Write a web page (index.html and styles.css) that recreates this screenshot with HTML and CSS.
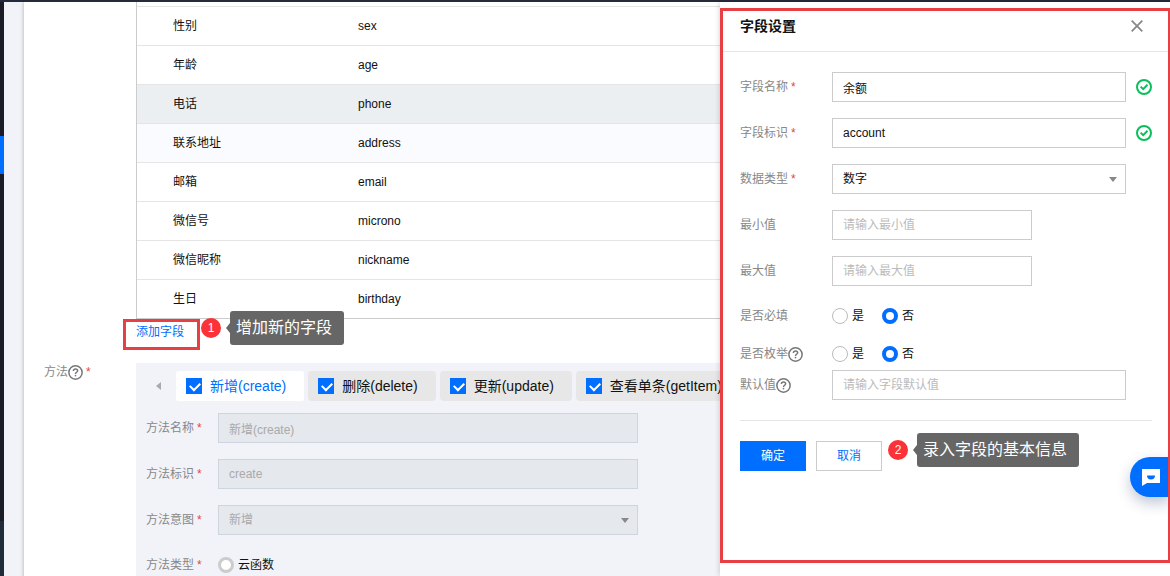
FILE: index.html
```html
<!DOCTYPE html>
<html lang="zh-CN">
<head>
<meta charset="utf-8">
<meta name="viewport" content="width=device-width, initial-scale=1">
<title>字段设置</title>
<link rel="stylesheet" href="styles.css">
</head>
<body>
<svg class="sprite" aria-hidden="true">
  <symbol id="help" viewBox="0 0 14 14">
    <circle cx="7" cy="7" r="6.2" fill="none" stroke="currentColor" stroke-width="1.4"/>
    <path d="M5 5.7C5 4.4 5.9 3.700 7 3.700s2 .7 2 1.700c0 1.300-2 1.500-2 2.900" fill="none" stroke="currentColor" stroke-width="1.400"/>
    <rect x="6.300" y="9.200" width="1.400" height="1.400" fill="currentColor"/>
  </symbol>
  <symbol id="passed" viewBox="0 0 16 16">
    <circle cx="8" cy="8" r="7" fill="none" stroke="currentColor" stroke-width="2"/>
    <path d="M4.600 7.600l2.600 2.500 4.300-4.300" fill="none" stroke="currentColor" stroke-width="2"/>
  </symbol>
  <symbol id="caret" viewBox="0 0 8 5">
    <path d="M0 0h8L4 5z" fill="currentColor"/>
  </symbol>
</svg>

<div class="topbar"></div>
<div class="shell">
  <nav class="sidebar"><span class="sidebar-active"></span><span class="sidebar-foot"></span></nav>
  <main class="page">
    <section class="panel">
      <div class="section">
        <div class="section-label"></div>
        <div class="section-body">
          <div class="table-wrap">
            <table class="fields">
              <tbody>
                <tr><td>性别</td><td>sex</td></tr>
                <tr><td>年龄</td><td>age</td></tr>
                <tr class="hovered"><td>电话</td><td>phone</td></tr>
                <tr class="tinted"><td>联系地址</td><td>address</td></tr>
                <tr><td>邮箱</td><td>email</td></tr>
                <tr><td>微信号</td><td>microno</td></tr>
                <tr><td>微信昵称</td><td>nickname</td></tr>
                <tr><td>生日</td><td>birthday</td></tr>
              </tbody>
            </table>
          </div>
          <div class="add-row">
            <a class="add-link" href="#">添加字段</a>
            <div class="callout callout-add">
              <span class="frame"></span>
              <span class="badge">1</span>
              <span class="tip">增加新的字段</span>
            </div>
          </div>
        </div>
      </div>

      <div class="section">
        <div class="section-label">方法<svg class="help"><use href="#help"/></svg><span class="required">*</span></div>
        <div class="section-body methods">
          <div class="tabs">
            <button class="tabs-prev" type="button" aria-label="上一个"><svg viewBox="0 0 5 8"><path d="M5 0v8L0 4z" fill="currentColor"/></svg></button>
            <label class="tab tab-active"><input class="check" type="checkbox" checked>新增(create)</label>
            <label class="tab"><input class="check" type="checkbox" checked>删除(delete)</label>
            <label class="tab"><input class="check" type="checkbox" checked>更新(update)</label>
            <label class="tab"><input class="check" type="checkbox" checked>查看单条(getItem)</label>
          </div>
          <form class="method-form">
            <div class="row">
              <label class="label" for="m-name">方法名称<span class="required">*</span></label>
              <input class="input" id="m-name" type="text" value="新增(create)" disabled>
            </div>
            <div class="row">
              <label class="label" for="m-id">方法标识<span class="required">*</span></label>
              <input class="input" id="m-id" type="text" value="create" disabled>
            </div>
            <div class="row">
              <label class="label" for="m-intent">方法意图<span class="required">*</span></label>
              <div class="select">
                <select class="input" id="m-intent" disabled><option>新增</option></select>
                <svg class="caret"><use href="#caret"/></svg>
              </div>
            </div>
            <div class="row row-choice">
              <span class="label">方法类型<span class="required">*</span></span>
              <label class="choice"><input class="radio" type="radio" name="m-type" disabled>云函数</label>
            </div>
          </form>
        </div>
      </div>
    </section>
  </main>
</div>

<aside class="drawer">
  <header class="drawer-head">
    <h2 class="drawer-title">字段设置</h2>
    <button class="close" type="button" aria-label="关闭"><svg viewBox="0 0 12 12"><path d="M.7.7l10.600 10.600M11.300.7L.7 11.300" stroke="currentColor" stroke-width="1.800"/></svg></button>
  </header>
  <form class="drawer-form">
    <div class="row">
      <label class="label" for="f-name">字段名称<span class="required">*</span></label>
      <input class="input" id="f-name" type="text" value="余额">
      <span class="status"><svg><use href="#passed"/></svg></span>
    </div>
    <div class="row">
      <label class="label" for="f-id">字段标识<span class="required">*</span></label>
      <input class="input" id="f-id" type="text" value="account">
      <span class="status"><svg><use href="#passed"/></svg></span>
    </div>
    <div class="row">
      <label class="label" for="f-type">数据类型<span class="required">*</span></label>
      <div class="select">
        <select class="input" id="f-type"><option>数字</option></select>
        <svg class="caret"><use href="#caret"/></svg>
      </div>
      <span class="status"></span>
    </div>
    <div class="row">
      <label class="label" for="f-min">最小值</label>
      <input class="input input-short" id="f-min" type="text" placeholder="请输入最小值">
    </div>
    <div class="row">
      <label class="label" for="f-max">最大值</label>
      <input class="input input-short" id="f-max" type="text" placeholder="请输入最大值">
    </div>
    <div class="row row-choice">
      <span class="label">是否必填</span>
      <label class="choice"><input class="radio" type="radio" name="req">是</label>
      <label class="choice"><input class="radio" type="radio" name="req" checked>否</label>
    </div>
    <div class="row row-choice row-enum">
      <span class="label">是否枚举<svg class="help"><use href="#help"/></svg></span>
      <label class="choice"><input class="radio" type="radio" name="enum">是</label>
      <label class="choice"><input class="radio" type="radio" name="enum" checked>否</label>
    </div>
    <div class="row row-default">
      <label class="label" for="f-default">默认值<svg class="help"><use href="#help"/></svg></label>
      <input class="input" id="f-default" type="text" placeholder="请输入字段默认值">
      <span class="status"></span>
    </div>
    <footer class="actions">
      <button class="btn btn-primary" type="button">确定</button>
      <button class="btn" type="button">取消</button>
      <div class="callout callout-form">
        <span class="badge">2</span>
        <span class="tip">录入字段的基本信息</span>
      </div>
    </footer>
  </form>
  <button class="chat" type="button" aria-label="在线客服">
    <svg viewBox="0 0 18 17"><path d="M0 0h18v14H5l-5 3z" fill="#fff"/><path d="M5 6.500h8c0 2.500-1.500 4-4 4s-4-1.500-4-4z" fill="#006eff"/></svg>
  </button>
  <span class="frame frame-drawer"></span>
</aside>
</body>
</html>
```

FILE: styles.css
```css
* { box-sizing: border-box; }

body {
  margin: 0;
  height: 100vh;
  overflow: hidden;
  display: flex;
  flex-direction: column;
  position: relative;
  background: #fff;
  color: #111;
  font: 12px/18px "Liberation Sans", "Noto Sans CJK SC", sans-serif;
}

input, select, button { font: inherit; color: inherit; }

.sprite { display: none; }

.topbar { flex: none; height: 2px; background: #252b3a; }

.shell { flex: 1; min-height: 0; display: flex; }

.sidebar { width: 4px; background: #1b1d26; display: flex; flex-direction: column; }
.sidebar-active { height: 38px; margin-top: 134px; background: #006eff; }
.sidebar-foot { height: 55px; margin-top: auto; background: #222c38; }

.page { flex: 1; min-width: 0; padding-left: 20px; background: #f2f3f8; overflow: hidden; }
.panel { min-height: 100%; padding-left: 20px; background: #fff; box-shadow: 0 0 4px rgba(0, 0, 0, 0.3); }

.section { display: flex; }
.section-label { flex: none; width: 92px; color: #888; display: flex; align-items: center; align-self: flex-start; }
.section-body { flex: 1; min-width: 0; }

.required { color: #e54545; margin-left: 3px; }
.help { width: 15px; height: 15px; color: #777; flex: none; }

/* Field list */
.table-wrap { padding-top: 4px; border: solid #ccc; border-width: 0 0 1px 1px; }
.fields { width: 100%; border-spacing: 0; table-layout: fixed; }
.fields td { height: 39px; padding: 0; border-top: 1px solid #e5e5e5; }
.fields td:first-child { width: 221px; padding-left: 36px; }
.hovered { background: #ebeff2; }
.tinted { background: #fafbfe; }

.add-row { position: relative; height: 44px; padding-top: 4px; }
.add-link { color: #006eff; text-decoration: none; }

/* Numbered callouts */
.callout { position: absolute; display: flex; align-items: center; gap: 9px; }
.callout-add { left: -13px; top: -8px; padding-left: 78px; }
.callout-form { left: 148px; top: 12px; }
.frame { position: absolute; left: 0; top: 8px; width: 77px; height: 31px; border: 3px solid #e64045; pointer-events: none; }
.badge { width: 20px; height: 20px; border-radius: 50%; background: #fb3238; color: #fff; text-align: center; line-height: 20px; }
.tip { position: relative; height: 34px; padding: 0 12px 0 6px; border-radius: 3px; background: #666; color: #fff; font-size: 16px; line-height: 34px; white-space: nowrap; }
.tip::before {
  content: "";
  position: absolute;
  left: -4px;
  top: 12px;
  border: solid transparent;
  border-width: 5px 4px 5px 0;
  border-right-color: #666;
}

/* Method tabs */
.methods { background: #f2f3f8; padding: 8px 0 10px; min-height: 240px; }
.tabs { display: flex; gap: 4px; overflow: hidden; }
.tabs-prev { flex: none; width: 36px; padding: 0 0 0 9px; border: 0; background: none; color: #aaa; display: flex; align-items: center; justify-content: center; }
.tabs-prev svg { width: 5px; height: 8px; }
.tab { flex: none; height: 30px; padding: 0 18px 0 10px; border-radius: 4px; background: #e7e7e7; display: flex; align-items: center; gap: 8px; font-size: 14px; }
.tab-active { background: #fff; color: #006eff; border-radius: 2px; }

.check { appearance: none; position: relative; width: 16px; height: 16px; margin: 0; background: #006eff; }
.check::before { content: ""; position: absolute; left: 4px; top: 4px; width: 8px; height: 5px; border: solid #fff; border-width: 0 0 2px 2px; transform: rotate(-45deg); }

/* Form controls */
.row { display: flex; align-items: center; min-height: 30px; }
.row-choice { min-height: 28px; }
.label { flex: none; color: #888; display: flex; align-items: center; }
.input { flex: 1; min-width: 0; width: 100%; height: 30px; margin: 0; padding: 0 10px; border: 1px solid #ccc; border-radius: 0; background: #fff; color: #111; outline: 0; }
.input::placeholder { color: #bbb; }
.input:disabled { background: #e5e8ed; border-color: #cfd5de; color: #aaa; opacity: 1; }
.input-short { flex: none; width: 200px; }
.select { flex: 1; min-width: 0; position: relative; display: flex; }
.select select { appearance: none; }
.caret { position: absolute; right: 9px; top: 13px; width: 8px; height: 5px; color: #888; pointer-events: none; }

.choice { display: flex; align-items: center; gap: 4px; margin-right: 18px; }
.radio { appearance: none; width: 16px; height: 16px; margin: 0; border: 1px solid #bbb; border-radius: 50%; background: #fff; }
.radio:checked { border: 4px solid #006eff; }
.radio:disabled { border: 3px solid #ccc; }

.method-form { display: flex; flex-direction: column; gap: 16px; width: 502px; padding: 12px 0 0 10px; }
.method-form .label { width: 72px; }

/* Drawer */
.drawer { position: absolute; right: 0; top: 2px; bottom: 0; width: 450px; background: #fff; box-shadow: 0 0 6px rgba(0, 0, 0, 0.2); overflow: hidden; }
.drawer-head { height: 50px; padding: 0 27px 2px 20px; border-bottom: 1px solid #e5e5e5; display: flex; align-items: center; justify-content: space-between; }
.drawer-title { margin: 0; font-size: 14px; line-height: 20px; font-weight: 700; }
.close { padding: 0; border: 0; background: none; color: #888; display: flex; }
.close svg { width: 12px; height: 12px; }

.drawer-form { display: flex; flex-direction: column; gap: 16px; padding: 20px 18px 0 20px; }
.drawer-form .label { width: 92px; }
.row-enum { margin-top: -6px; }
.row-default { margin-top: -14px; }
.status { flex: none; width: 26px; height: 16px; padding-left: 10px; color: #0abf5b; display: flex; }
.status svg { width: 16px; height: 16px; }

.actions { position: relative; display: flex; gap: 10px; margin-top: 4px; padding-top: 20px; border-top: 1px solid #e5e5e5; }
.btn { width: 66px; height: 30px; padding: 0; border: 1px solid #ccc; background: #fff; color: #006eff; }
.btn-primary { background: #006eff; border-color: #006eff; color: #fff; }

.chat { position: absolute; right: 0; top: 455px; width: 40px; height: 40px; padding: 0 0 0 12px; border: 0; border-radius: 20px 0 0 20px; background: #006eff; box-shadow: 0 6px 14px rgba(0, 30, 90, 0.25); display: flex; align-items: center; }
.chat svg { width: 18px; height: 17px; }
.frame-drawer { top: 6px; width: 100%; height: 555px; border-right-width: 2px; }
```
